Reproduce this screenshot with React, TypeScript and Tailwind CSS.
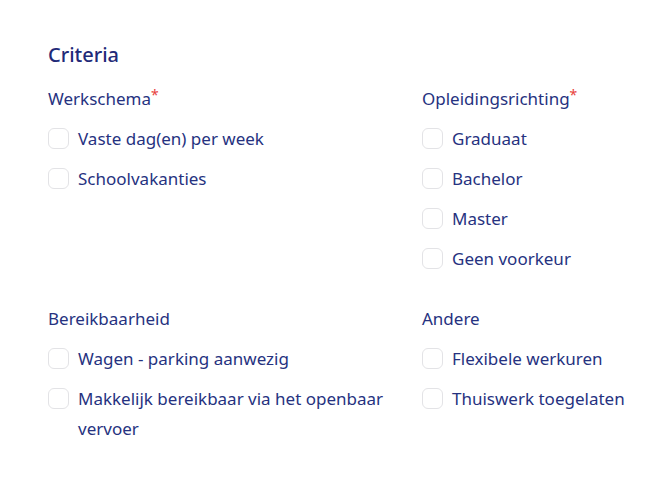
import React from "react";

const Item = ({ label }: { label: string }) => (
  <div className="flex items-start py-[5px] pr-4">
    <div className="mt-[4px] w-[21px] h-[21px] shrink-0 rounded-[6px] border border-[#e3e3e6] bg-white" />
    <span className="ml-[9px] leading-[30px] text-[17px] text-[#26327f]">{label}</span>
  </div>
);

const Section = ({ title, required, items }: { title: string; required?: boolean; items: string[] }) => (
  <div className="flex flex-col">
    <div className="h-10 flex items-center text-[17px] text-[#26327f]">
      <span>{title}</span>
      {required && <span className="text-[#e8413c] self-start mt-[9px] text-[14px] leading-none">*</span>}
    </div>
    {items.map((i) => (
      <Item key={i} label={i} />
    ))}
  </div>
);

export default function App() {
  return (
    <div className="w-[670px] h-[480px] bg-white pl-[48px] pt-[41px]" style={{ fontFamily: '"Noto Sans", sans-serif' }}>
      <h1 className="text-[20px] leading-[28px] font-medium text-[#1f2a78]">Criteria</h1>
      <div className="mt-[10px] grid grid-cols-[374px_1fr] gap-y-[20px]">
        <Section title="Werkschema" required items={["Vaste dag(en) per week", "Schoolvakanties"]} />
        <Section title="Opleidingsrichting" required items={["Graduaat", "Bachelor", "Master", "Geen voorkeur"]} />
        <Section title="Bereikbaarheid" items={["Wagen - parking aanwezig", "Makkelijk bereikbaar via het openbaar vervoer"]} />
        <Section title="Andere" items={["Flexibele werkuren", "Thuiswerk toegelaten"]} />
      </div>
    </div>
  );
}
